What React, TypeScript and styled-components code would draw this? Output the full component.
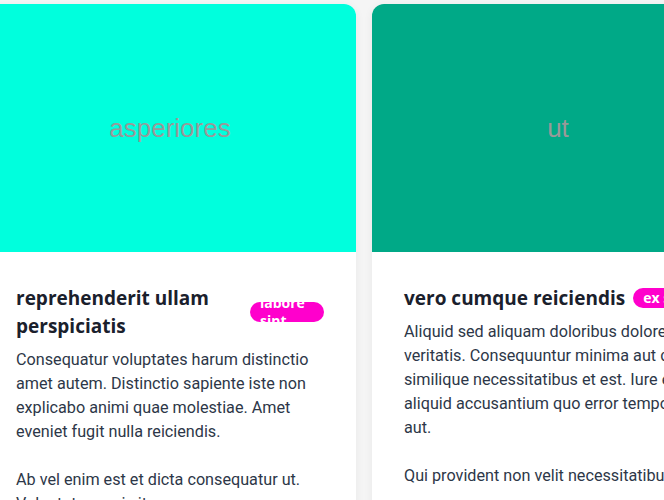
import React from "react";
import styled, { createGlobalStyle } from "styled-components";

const GlobalStyle = createGlobalStyle`
  html, body {
    margin: 0;
    padding: 0;
    background: #f5f5f5;
    overflow: hidden;
  }
`;

type Post = {
  image: string;
  color: string;
  title: string;
  tag: string;
  body: string;
};

const posts: Post[] = [
  {
    image: "asperiores",
    color: "#00ffdd",
    title: "reprehenderit ullam perspiciatis",
    tag: "labore sint",
    body:
      "Consequatur voluptates harum distinctio amet autem. Distinctio sapiente iste non explicabo animi quae molestiae. Amet eveniet fugit nulla reiciendis.\n\nAb vel enim est et dicta consequatur ut. Voluptatem qui sit.",
  },
  {
    image: "ut",
    color: "#00a987",
    title: "vero cumque reiciendis",
    tag: "ex sunt",
    body:
      "Aliquid sed aliquam doloribus dolores fugit veritatis. Consequuntur minima aut quia similique necessitatibus et est. Iure eum aliquid accusantium quo error tempore aut.\n\nQui provident non velit necessitatibus aut.",
  },
];

export default function App() {
  return (
    <>
      <GlobalStyle />
      <Track>
        {posts.map((p) => (
          <Card key={p.title}>
            <Cover $bg={p.color}>{p.image}</Cover>
            <Content>
              <TitleRow>
                <Title>{p.title}</Title>
                <Badge>{p.tag}</Badge>
              </TitleRow>
              <Body>{p.body}</Body>
            </Content>
          </Card>
        ))}
      </Track>
    </>
  );
}

const Track = styled.div`
  display: flex;
  gap: 16px;
  padding-top: 4px;
  margin-left: -16px;
`;

const Card = styled.article`
  flex: 0 0 372px;
  background: #fff;
  border-radius: 12px;
  overflow: hidden;
  box-shadow: 0 2px 10px rgba(0, 0, 0, 0.06);
`;

const Cover = styled.div<{ $bg: string }>`
  height: 248px;
  background: ${(p) => p.$bg};
  display: flex;
  align-items: center;
  justify-content: center;
  font-family: "Liberation Sans", Arial, sans-serif;
  font-size: 26px;
  color: #999;
`;

const Content = styled.div`
  padding: 32px;
  font-family: Roboto, "Noto Sans", sans-serif;
`;

const TitleRow = styled.div`
  display: flex;
  align-items: center;
  gap: 8px;
  margin-bottom: 8px;
`;

const Title = styled.h2`
  margin: 0;
  font-family: "Open Sans", "Noto Sans", sans-serif;
  font-size: 19px;
  line-height: 28px;
  font-weight: 700;
  color: #1a202c;
`;

const Badge = styled.span`
  flex: 0 0 74px;
  box-sizing: border-box;
  height: 20px;
  padding: 0 10px;
  border-radius: 10px;
  background: #ff00cc;
  color: #fff;
  font-family: "Open Sans", "Noto Sans", sans-serif;
  font-size: 14px;
  line-height: 18px;
  font-weight: 700;
  display: flex;
  align-items: center;
`;

const Body = styled.p`
  margin: 0;
  font-size: 16.2px;
  line-height: 24px;
  color: #2d3748;
  white-space: pre-line;
`;
